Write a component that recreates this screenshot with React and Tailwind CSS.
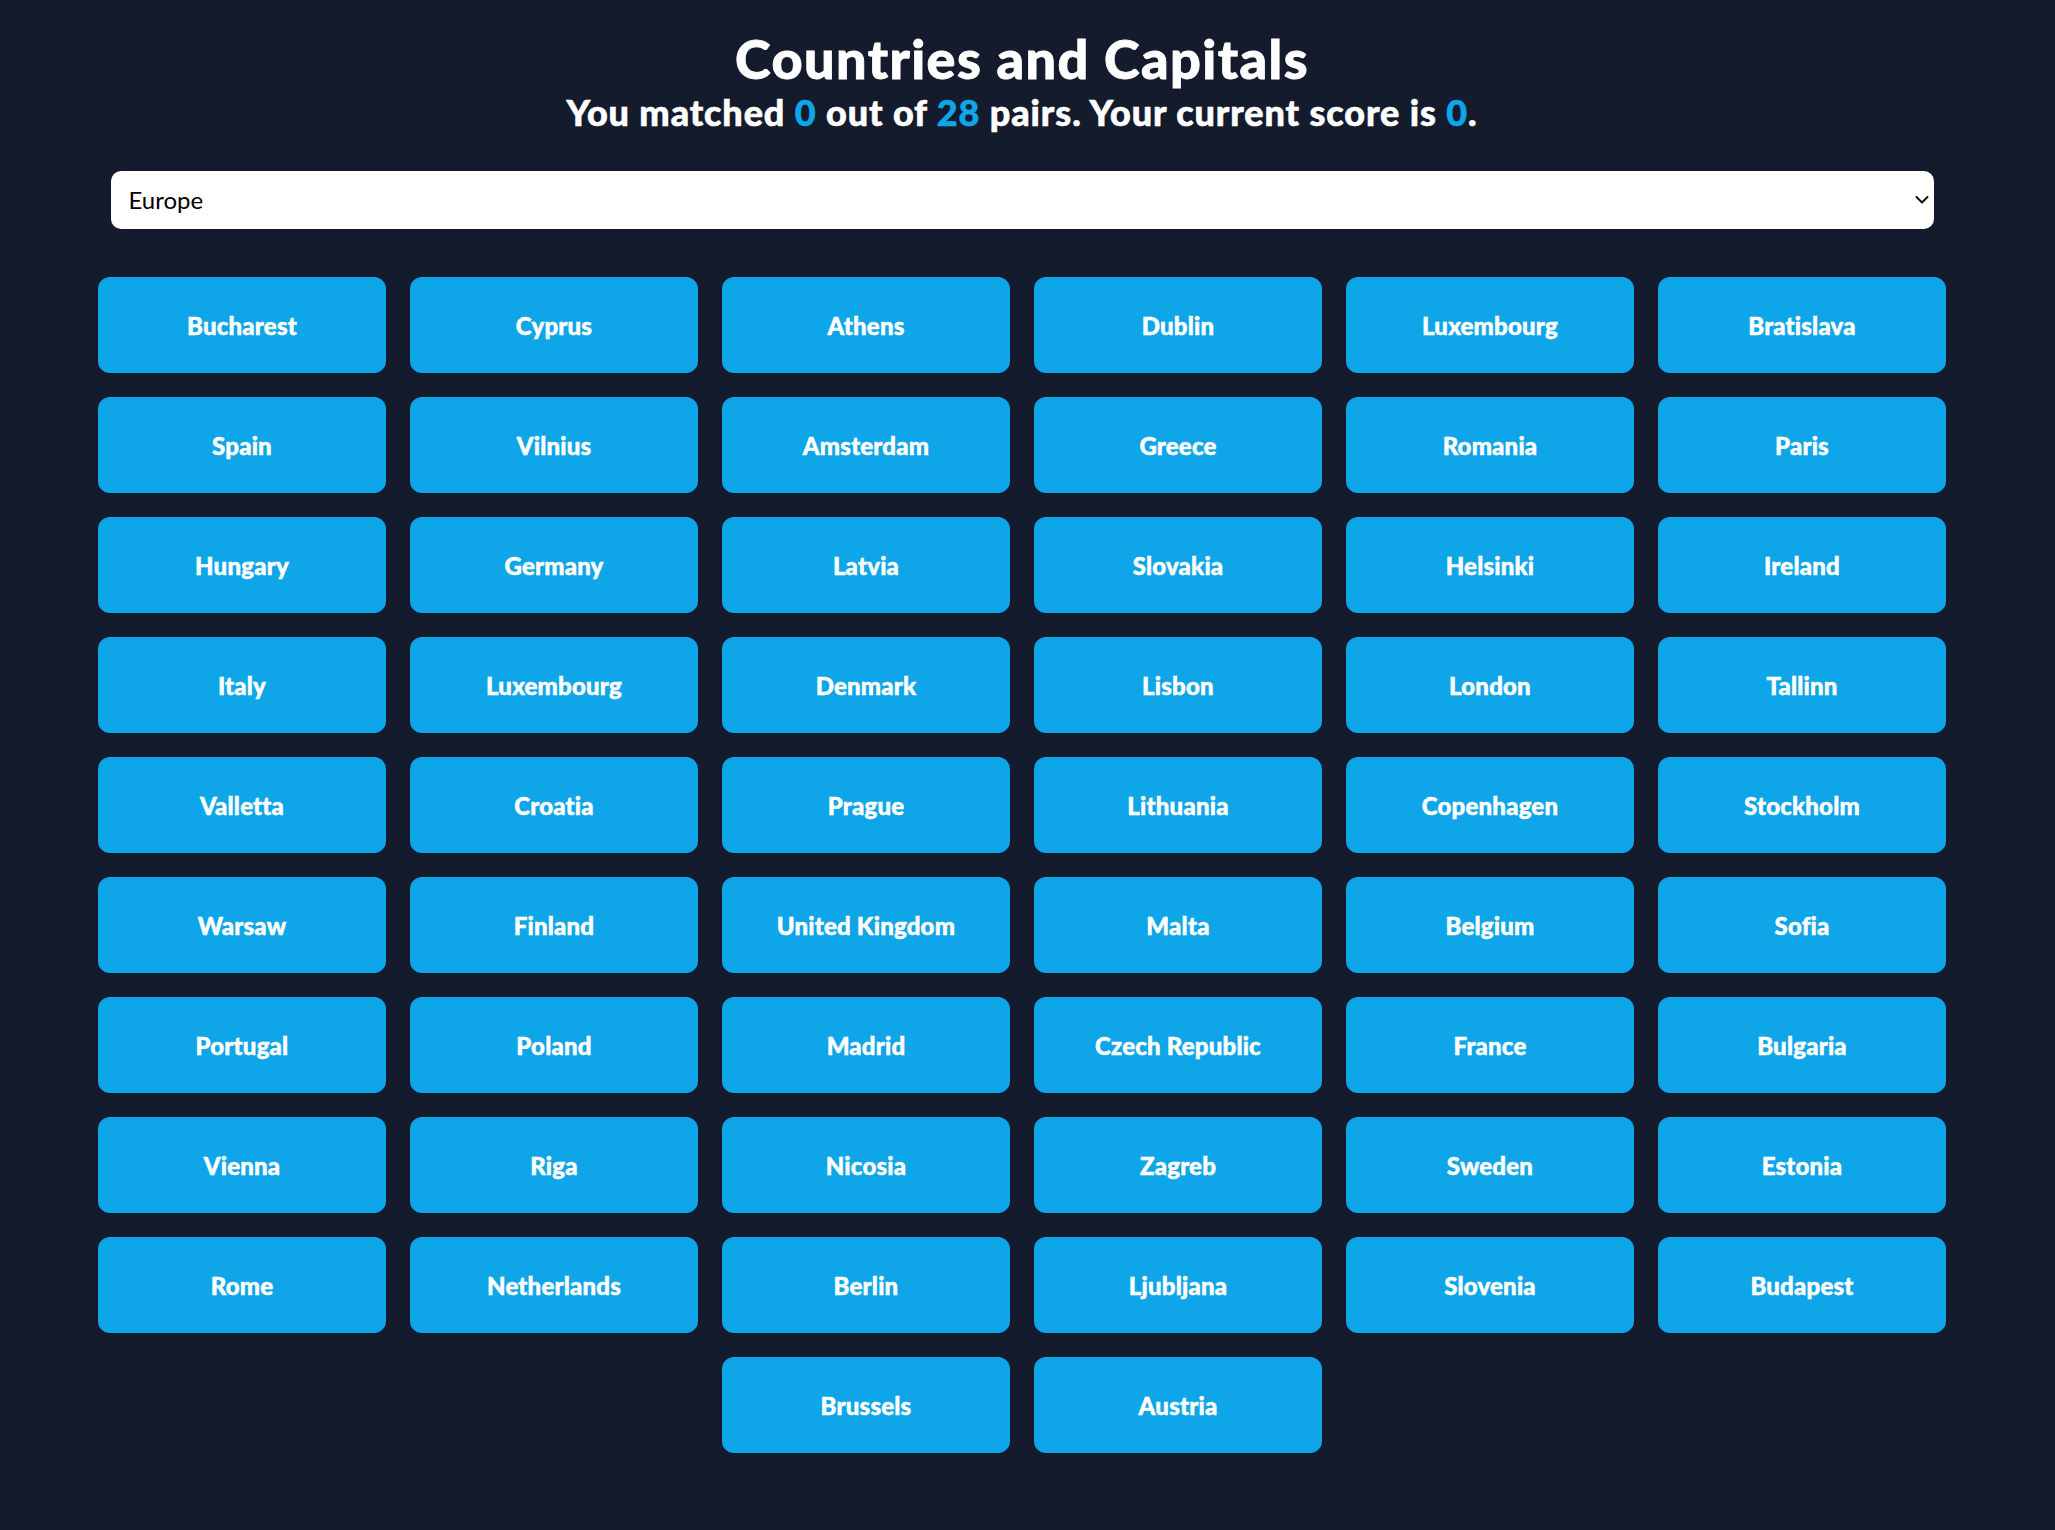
import React from "react";

const items = [
  "Bucharest", "Cyprus", "Athens", "Dublin", "Luxembourg", "Bratislava",
  "Spain", "Vilnius", "Amsterdam", "Greece", "Romania", "Paris",
  "Hungary", "Germany", "Latvia", "Slovakia", "Helsinki", "Ireland",
  "Italy", "Luxembourg", "Denmark", "Lisbon", "London", "Tallinn",
  "Valletta", "Croatia", "Prague", "Lithuania", "Copenhagen", "Stockholm",
  "Warsaw", "Finland", "United Kingdom", "Malta", "Belgium", "Sofia",
  "Portugal", "Poland", "Madrid", "Czech Republic", "France", "Bulgaria",
  "Vienna", "Riga", "Nicosia", "Zagreb", "Sweden", "Estonia",
  "Rome", "Netherlands", "Berlin", "Ljubljana", "Slovenia", "Budapest",
  "Brussels", "Austria",
];

export default function App() {
  return (
    <div className="min-h-screen bg-[#141b2d] font-['Lato','Liberation_Sans',sans-serif]">
      <div className="w-[2044px] flex flex-col items-center pt-[27px] pb-[77px]">
        <h1 className="text-[54px] leading-[64px] font-black tracking-[1.4px] text-white [-webkit-text-stroke:0.8px_currentColor]">Countries and Capitals</h1>
        <p className="mt-[-1px] text-[36px] leading-[44px] font-black tracking-[0.9px] text-white [-webkit-text-stroke:0.6px_currentColor]">
          You matched <span className="text-[#0ea5e9]">0</span> out of{" "}
          <span className="text-[#0ea5e9]">28</span> pairs. Your current score is{" "}
          <span className="text-[#0ea5e9]">0</span>.
        </p>
        <div className="relative mt-[37px] w-[1823px]">
          <select
            defaultValue="Europe"
            className="w-full h-[58px] appearance-none rounded-[10px] bg-white pl-[18px] text-[24px] text-black outline-none font-['Lato','Liberation_Sans',sans-serif]"
          >
            <option>Europe</option>
            <option>Asia</option>
            <option>Africa</option>
            <option>Americas</option>
            <option>Oceania</option>
          </select>
          <svg
            className="pointer-events-none absolute right-[5px] top-1/2 -translate-y-1/2"
            width="14"
            height="9"
            viewBox="0 0 14 9"
            fill="none"
          >
            <path d="M1.5 1.5 L7 7 L12.5 1.5" stroke="#111" strokeWidth="2" strokeLinecap="round" strokeLinejoin="round" />
          </svg>
        </div>
        <div className="mt-[48px] w-[1848px] flex flex-wrap justify-center gap-[24px]">
          {items.map((name, i) => (
            <button
              key={i}
              className="w-[288px] h-[96px] rounded-[12px] bg-[#0ea5e9] text-white text-[24px] font-black pt-[2px] tracking-[0.2px] [-webkit-text-stroke:0.5px_currentColor] flex items-center justify-center"
            >
              {name}
            </button>
          ))}
        </div>
      </div>
    </div>
  );
}
